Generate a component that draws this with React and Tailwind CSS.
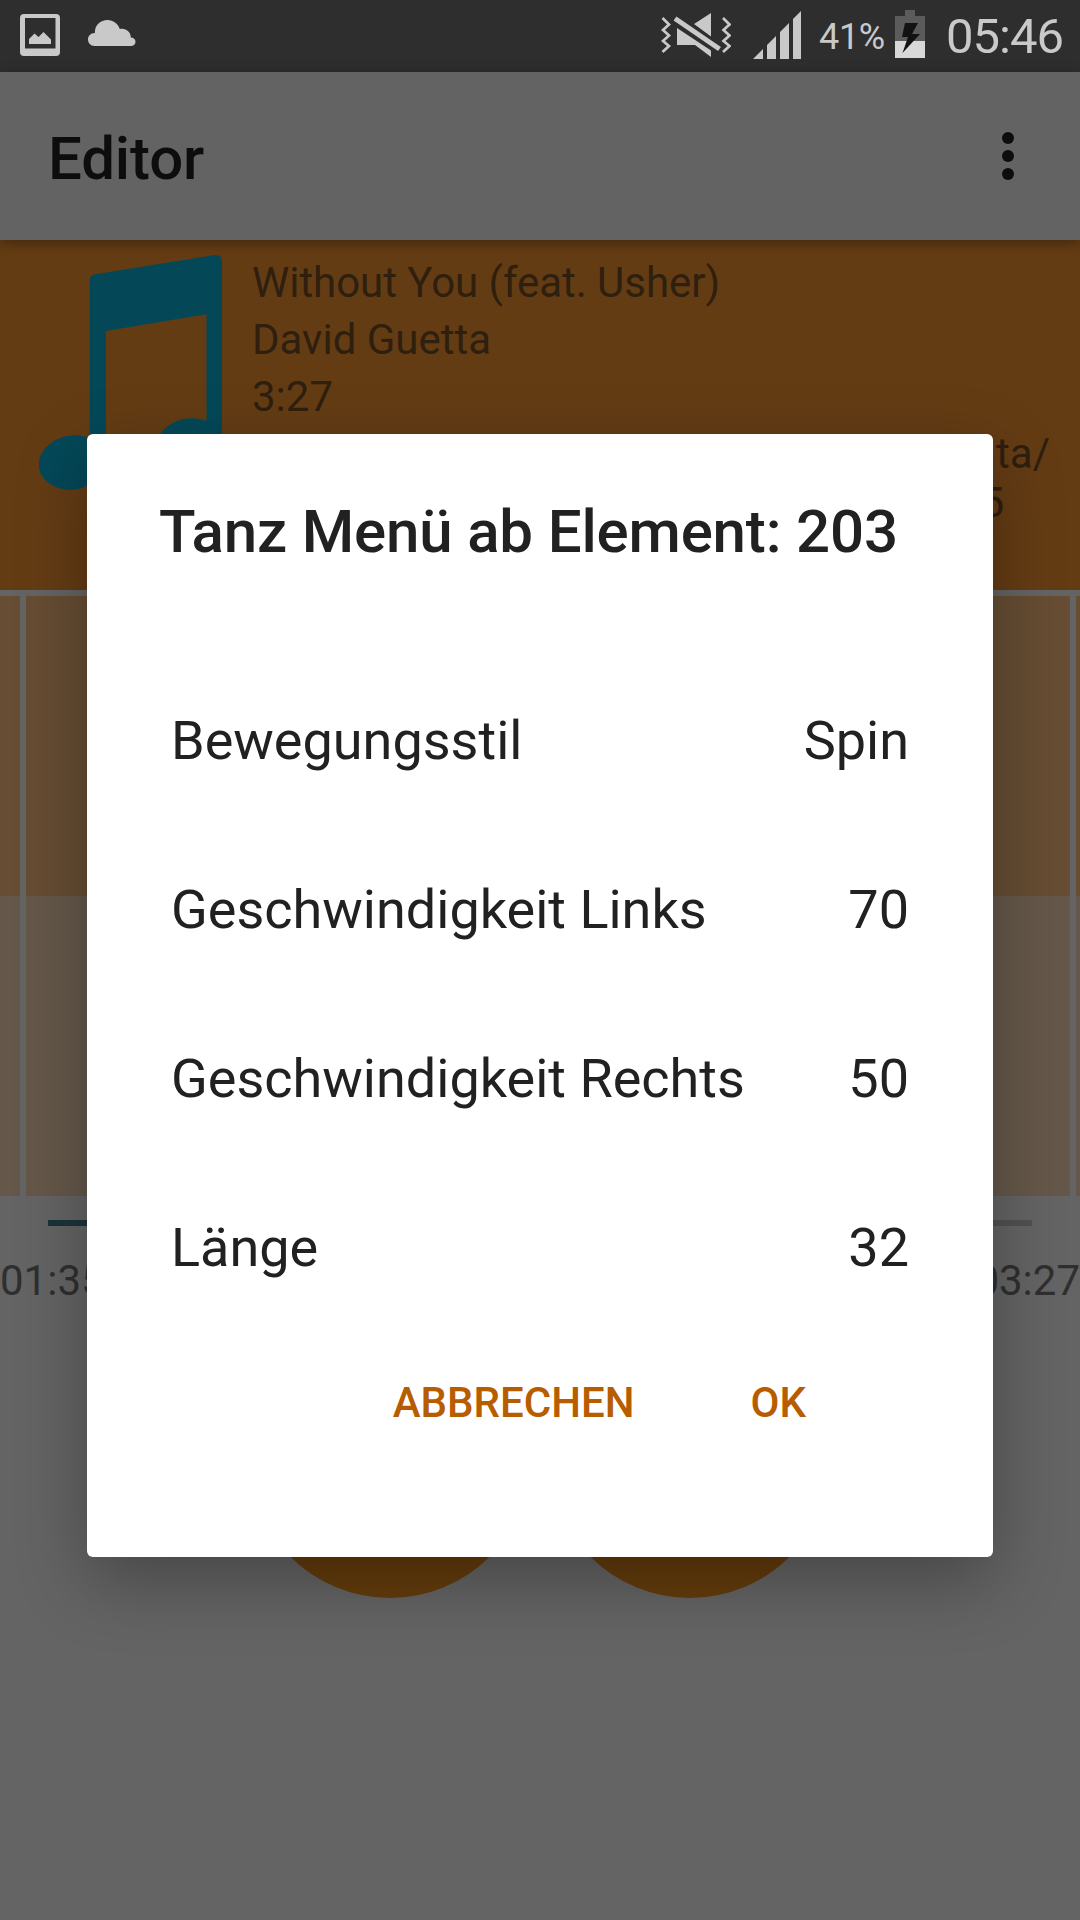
const settings = [
  ["Bewegungsstil", "Spin"],
  ["Geschwindigkeit Links", "70"],
  ["Geschwindigkeit Rechts", "50"],
  ["Länge", "32"],
];

function PictureIcon() {
  return (
    <svg width="40" height="44" viewBox="0 0 40 44" className="shrink-0">
      <path fillRule="evenodd" fill="#c9c9c9" d="M4 0H36Q40 0 40 4V38Q40 42 36 42H4Q0 42 0 38V4Q0 0 4 0ZM5 4V34.500H35.500V4Z" />
      <path fill="#c9c9c9" d="M9 30V25L14.500 19.500L18.500 23L23.500 18L31 25.500V30Z" />
    </svg>
  );
}

function CloudIcon() {
  return (
    <svg width="48" height="27" viewBox="0 0 48 27" className="shrink-0">
      <path fill="#c9c9c9" d="M6.500 26C2.500 26 0 23 0 19.500C0 16 2.500 13.200 6.800 13C6.800 5 12.500 0 19.500 0C25 0 30 3.500 31.800 9C37 7.500 43 11.500 42.800 17.500C45.500 17.500 47.500 19.500 47.500 21.700C47.500 24.200 45.500 26 43 26Z" />
    </svg>
  );
}

function MuteVibrateIcon() {
  return (
    <svg width="70" height="46" viewBox="0 0 70 46" className="shrink-0">
      <g fill="none" stroke="#c9c9c9" strokeWidth="2.700">
        <path d="M1.500 6L8 12.500L2 18L8 23.500L2 29L8 34L1.500 40" />
        <path d="M62 6L68.500 12.500L62.500 18L68.500 23.500L62.500 29L68.500 34L62 40" />
      </g>
      <path fill="#c9c9c9" d="M33 12L50 1V24.500ZM16 16L50 38.500V45L34 33H16Z" />
      <path stroke="#2e2e2e" strokeWidth="9" d="M14 6.500L58.500 37" />
      <path stroke="#c9c9c9" strokeWidth="5" d="M14 6.500L58.500 37" />
    </svg>
  );
}

function SignalIcon() {
  return (
    <svg width="48" height="48" viewBox="0 0 48 48" className="shrink-0">
      <path fill="#c9c9c9" d="M0 48L10 38V48ZM14 34L23 25V48H14ZM27 21L36 12V48H27ZM40 8L48 0V48H40Z" />
    </svg>
  );
}

function BatteryIcon() {
  return (
    <svg width="30" height="48" viewBox="0 0 30 48" className="shrink-0">
      <path fill="#5b5b5b" d="M10 0H20V6H30V31H0V6H10Z" />
      <path fill="#d8d8d8" d="M0 31H30V48H0Z" />
      <path fill="#121212" d="M10 13H23L17 24H25L7.500 43L13 27H7Z" />
    </svg>
  );
}

function MusicNote() {
  return (
    <svg width="184" height="236" viewBox="0 -1 184 236" className="shrink-0" fill="#044858">
      <path fillRule="evenodd" d="M50.700 205V25Q50.700 20.500 56 19.200L176 0Q183 -.5 183 6V190H167.500V59.300L67 76V205Z" />
      <ellipse cx="33.500" cy="207.500" rx="34" ry="27" transform="rotate(-9 33.500 207.500)" />
      <ellipse cx="150.500" cy="190.500" rx="34" ry="27" transform="rotate(-9 150.500 190.500)" />
    </svg>
  );
}

function StatusBar() {
  return (
    <header className="flex h-[72px] bg-[#2e2e2e] text-[#c9c9c9]">
      <div className="flex flex-1 pl-5">
        <div className="pt-[14px]"><PictureIcon /></div>
        <div className="ml-[28px] pt-[20px]"><CloudIcon /></div>
      </div>
      <div className="flex pr-[15px]">
        <div className="pt-[12px]"><MuteVibrateIcon /></div>
        <div className="ml-[22px] pt-[11px]"><SignalIcon /></div>
        <span className="ml-[18px] w-[66px] whitespace-nowrap text-[36px] leading-[74px] tracking-[-0.3px]">41%</span>
        <div className="ml-[10px] pt-[10px]"><BatteryIcon /></div>
        <span className="ml-[21px] w-[119px] whitespace-nowrap text-[49px] leading-[73px] tracking-[-1px]">05:46</span>
      </div>
    </header>
  );
}

function AppBar() {
  return (
    <div className="relative z-10 flex h-[168px] items-center justify-between bg-[#636363] pr-[66px] pl-12 text-[#0d0d0d] shadow-[0_3px_12px_rgba(0,0,0,0.35)]">
      <h1 className="pt-[6px] text-[60px] leading-[70px] font-medium tracking-[-0.15px]">Editor</h1>
      <div className="mb-[1px] flex flex-col gap-[6px]">
        <i className="size-3 rounded-full bg-[#0d0d0d]" />
        <i className="size-3 rounded-full bg-[#0d0d0d]" />
        <i className="size-3 rounded-full bg-[#0d0d0d]" />
      </div>
    </div>
  );
}

function Cell({ width }) {
  return (
    <div className={width}>
      <div className="h-[300px] bg-[#664d33]" />
      <div className="h-[300px] bg-[#65584a]" />
    </div>
  );
}

function Dialog() {
  return (
    <section
      role="dialog"
      className="absolute top-[434px] left-[87px] z-20 h-[1123px] w-[906px] rounded-[6px] bg-white pt-[63px] text-[#212121] shadow-[0_24px_70px_rgba(0,0,0,0.3)]"
    >
      <h2 className="pl-[72px] text-[60px] leading-[70px] font-medium tracking-[-0.16px] whitespace-nowrap">Tanz Menü ab Element: 203</h2>
      <div className="mt-[89px] pr-[84px] pl-[84px]">
        {settings.map(([label, value]) => (
          <div key={label} className="flex h-[169px] items-center justify-between text-[54px] leading-[169px] whitespace-nowrap">
            <span>{label}</span>
            <span>{value}</span>
          </div>
        ))}
      </div>
      <div className="mt-[47px] flex justify-end gap-[116px] pr-[187px] text-[42px] leading-[48px] font-medium text-[#b85c00]">
        <button>ABBRECHEN</button>
        <button>OK</button>
      </div>
    </section>
  );
}

export default function App() {
  return (
    <div className="relative flex h-[1920px] w-[1080px] flex-col overflow-hidden bg-[#646464] font-['Roboto',sans-serif]">
      <StatusBar />
      <AppBar />
      <div className="flex h-[350px] bg-[#643c14] pt-[14px] pl-[39px] text-[42px] text-[#2e1f0f]">
        <MusicNote />
        <div className="ml-[29px] flex-1 leading-[57px]">
          <p className="tracking-[-0.04px]">Without You (feat. Usher)</p>
          <p>David Guetta</p>
          <p>3:27</p>
          <div className="mt-[4px] flex flex-col items-end pr-[30px] leading-[49px]">
            <p>ta/</p>
            <p className="pr-[46px]">5</p>
          </div>
        </div>
      </div>
      <div className="mt-[6px] flex gap-[6px]">
        <Cell width="w-[20px]" />
        <Cell width="w-[1044px]" />
        <Cell width="w-[4px]" />
      </div>
      <div className="mx-12 mt-6 flex h-[6px]">
        <div className="w-[460px] bg-[#1b3439]" />
        <div className="flex-1 bg-[#515151]" />
      </div>
      <div className="mt-[30px] flex justify-between text-[42px] leading-[49px] text-[#2f2f2f]">
        <span>01:35</span>
        <span>03:27</span>
      </div>
      <div className="mt-[11px] flex justify-center gap-[18px]">
        <div className="size-[282px] rounded-full bg-[#643c0c]" />
        <div className="size-[282px] rounded-full bg-[#643c0c]" />
      </div>
      <Dialog />
    </div>
  );
}
